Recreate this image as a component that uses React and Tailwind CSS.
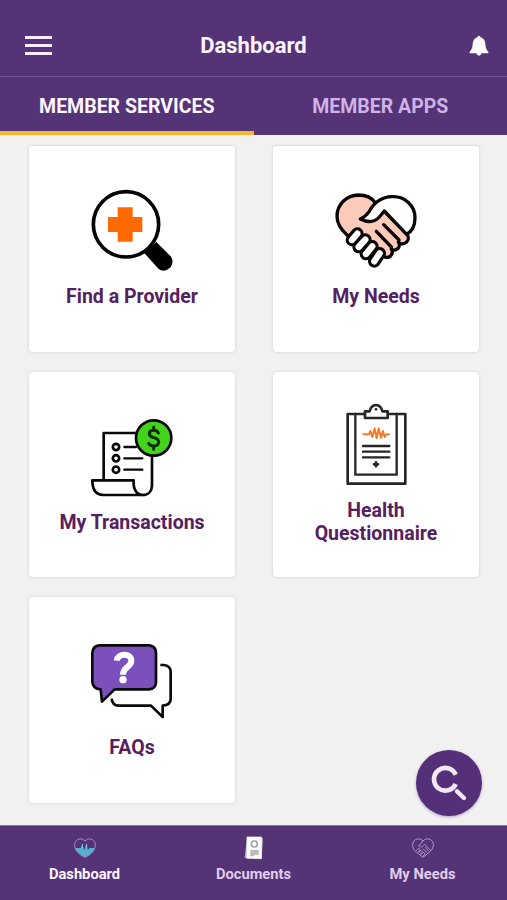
import { useState } from "react";

function SearchCross() {
  return (
    <svg viewBox="0 -1 312 300" className="w-[104px] h-[100px]" fill="none">
      <path d="M205 208 L229 185 L272 228 Q283 243 272 261 Q254 278 236 266 L190 215 Z" fill="#000" />
      <circle cx="138" cy="132" r="98" fill="#fff" stroke="#050505" strokeWidth="11" />
      <path d="M113 81h45v29h29v45h-29v29h-45v-29H84v-45h29z" fill="#ff6a00" />
    </svg>
  );
}

const fingers = [
  "M97 160L81 179",
  "M121 178L101 200",
  "M142 198L123 221",
  "M164 219L148 243",
];

function HeartHands() {
  return (
    <svg viewBox="-3 -1 312 300" className="w-[104px] h-[100px]" fill="none" stroke="#0a0606" strokeWidth="10" strokeLinejoin="round" strokeLinecap="round">
      <path d="M151 67C139 51 121 44 101 44C64 45 36 72 36 108C36 132 49 149 66 164L172 224A16 16 0 0 0 199 206A15 15 0 0 0 220 185A15 15 0 0 0 245 161L178 92Z" fill="#fccbb9" />
      <path d="M106 116C119 110 126 103 133 93C148 65 173 50 201 49C240 47 270 77 270 112C270 133 261 153 245 162L178 92L163 110C148 127 126 126 106 116Z" fill="#fff" />
      <path d="M176 133L222 179M154 153L199 200" />
      {fingers.map((d) => (
        <g key={d}>
          <path d={d} strokeWidth="38" />
          <path d={d} stroke="#fff" strokeWidth="19" />
        </g>
      ))}
    </svg>
  );
}

function Receipt() {
  return (
    <svg viewBox="0 1 312 285" className="w-[104px] h-[95px]" fill="none" stroke="#080808" strokeWidth="8" strokeLinejoin="round" strokeLinecap="round">
      <path d="M71 208V67H175M216 130V222C216 242 205 253 188 253" />
      <path d="M188 253H70C47 253 37 238 37 209H161C159 236 170 253 188 253Z" fill="#fff" />
      <circle cx="108" cy="109" r="9.5" />
      <circle cx="108" cy="143" r="9.5" />
      <circle cx="108" cy="177" r="9.5" />
      <path d="M133 109H168M133 143H187M133 177H187" strokeWidth="7" />
      <circle cx="221" cy="82" r="53" fill="#44d31d" />
      <path d="M235 67C231 56 208 56 208 69C208 85 236 77 236 94C236 109 211 109 206 98M221 49V58M221 106V116" strokeWidth="9" stroke="#0c2b07" />
    </svg>
  );
}

function Clipboard() {
  return (
    <svg viewBox="-3 1 312 300" className="w-[104px] h-[100px]" fill="none" stroke="#262626" strokeWidth="8" strokeLinejoin="round" strokeLinecap="round">
      <path d="M68 58H241V267H68Z" />
      <path d="M91 58V240H215V58" strokeWidth="7" />
      <path d="M120 70V50H134Q138 32 153 31Q168 32 172 50H188V70Z" fill="#fff" />
      <circle cx="153" cy="44" r="4" fill="#262626" stroke="none" />
      <path d="M115 119H132L136 109L142 127L149 101L155 131L161 101L168 129L174 109L179 127L184 119H192" stroke="#f47b2c" strokeWidth="6" />
      <path d="M114 154H193M114 171H193M114 188H193" strokeWidth="7" />
      <path d="M153 203V215M147 209H159" strokeWidth="8" />
    </svg>
  );
}

function Bubbles() {
  return (
    <svg viewBox="0 0 312 285" className="w-[104px] h-[95px]" fill="none" stroke="#0a0a0a" strokeWidth="8" strokeLinejoin="round" strokeLinecap="butt">
      <path d="M241 90H251Q272 92 272 111V191Q272 210 248 212V246L213 212H116Q97 212 95 191" strokeWidth="8" />
      <path d="M58 31H208Q228 34 228 53V142Q227 161 207 163H104L66 200L62 163Q38 162 37 139V54Q38 33 58 31Z" fill="#7b4fbc" />
      <path d="M110 77C113 54 154 52 154 77C154 97 129 95 129 119" stroke="#fff" strokeWidth="18" />
      <circle cx="129" cy="134" r="11" fill="#fff" stroke="none" />
    </svg>
  );
}

function PulseHeart() {
  return (
    <svg viewBox="0 0 66 60" className="w-[22px] h-5" fill="none">
      <path d="M3 30H20L25 20L31 37L36 20L42 36L46 30H63C58 42 46 52 33 58C20 52 8 42 3 30Z" fill="#4eb3cc" />
      <path d="M25 18V31M38 18V31" stroke="#8bd0e4" strokeWidth="3" />
      <path d="M33 9C25-1 4 0 2 19C1 36 14 49 33 58C52 49 65 36 64 19C62 0 41-1 33 9Z" stroke="#a98ac6" strokeWidth="3" />
    </svg>
  );
}

function Papers() {
  return (
    <svg viewBox="0 0 60 72" className="w-5 h-6" fill="none">
      <path d="M9 2L57 6L53 70L2 66Z" fill="#bdb5c5" />
      <path d="M8 2H53V68H8Z" fill="#fafafa" />
      <circle cx="31" cy="24" r="9" stroke="#a4a7a7" strokeWidth="5" />
      <path d="M19 42H44V57H32L28 61H19Z" fill="#bbbdbd" />
    </svg>
  );
}

function SmallHands() {
  return (
    <svg viewBox="0 0 66 60" className="w-[22px] h-5" fill="none" stroke="#b594ce" strokeWidth="3" strokeLinejoin="round">
      <path d="M33 9C24-1 4 0 2 19C1 31 8 39 14 43L33 58L52 43C59 37 65 29 64 19C62 0 41-1 33 9Z" />
      <path d="M33 9L20 24C25 30 32 26 38 19L56 37M39 27L51 40M33 32L46 45M12 38L20 31L25 36L17 43M20 44L27 37L32 42L24 49M27 50L34 43L39 48L32 56" />
    </svg>
  );
}

const services = [
  { name: "Find a Provider", icon: SearchCross, card: "pt-[34px]", label: "mt-[5px]" },
  { name: "My Needs", icon: HeartHands, card: "pt-[34px]", label: "mt-[5px]" },
  { name: "My Transactions", icon: Receipt, card: "pt-[39px]", label: "mt-[5px]" },
  { name: "Health Questionnaire", icon: Clipboard, card: "pt-[23px]", label: "mt-[4px]" },
  { name: "FAQs", icon: Bubbles, card: "pt-[38px]", label: "mt-[6px]" },
];

const navItems = [
  { name: "Dashboard", icon: PulseHeart },
  { name: "Documents", icon: Papers },
  { name: "My Needs", icon: SmallHands },
];

export default function App() {
  const [tab, setTab] = useState("services");
  const [page, setPage] = useState("Dashboard");

  return (
    <div className="relative flex flex-col h-[900px] w-full bg-[#f1f1f0] font-[Roboto,sans-serif] overflow-hidden">
      <header className="h-[77px] shrink-0 pt-[15px] px-[18px] bg-[#543376] border-b border-[#75539a] flex items-center justify-between">
        <button aria-label="Menu" className="w-[28px] ml-[7px] flex flex-col gap-[5px]">
          <span className="h-[3px] w-[27px] bg-[#f8edff]" />
          <span className="h-[3px] w-[27px] bg-[#f8edff]" />
          <span className="h-[3px] w-[27px] bg-[#f8edff]" />
        </button>
        <h1 className="text-[22px] leading-7 font-bold text-[#fdf5ff]">Dashboard</h1>
        <button aria-label="Notifications" className="w-[35px] flex justify-end">
          <svg viewBox="0 0 60 66" className="w-5 h-[22px]" fill="#fff">
            <path d="M30 2Q34 2 35 7Q48 11 49 27Q49 42 58 50V55H38Q35 62 30 62Q25 62 22 55H2V50Q11 42 11 27Q12 11 25 7Q26 2 30 2Z" />
          </svg>
        </button>
      </header>

      <div className="h-[58px] shrink-0 grid grid-cols-2 bg-[#543376] text-[19.5px] font-bold">
        <button onClick={() => setTab("services")} className={`pt-[5px] border-b-[4px] ${tab === "services" ? "border-[#f7b731] text-[#fff5ff]" : "border-transparent text-[#cfb2e6]"}`}>MEMBER SERVICES</button>
        <button onClick={() => setTab("apps")} className={`pt-[5px] border-b-[4px] ${tab === "apps" ? "border-[#f7b731] text-[#fff5ff]" : "border-transparent text-[#cfb2e6]"}`}>MEMBER APPS</button>
      </div>

      <main className="flex-1 pt-[11px] pl-[29px]">
        <div className="grid grid-cols-[206px_206px] gap-x-[38px] gap-y-[20px]">
          {services.map((s) => (
            <div key={s.name} className={`h-[205.5px] bg-white rounded-[4px] shadow-[0_0_2px_1px_#dedede] flex flex-col items-center ${s.card}`}>
              <s.icon />
              <p className={`w-[160px] text-center text-[19.5px] leading-[23px] font-bold text-[#55205f] ${s.label}`}>{s.name}</p>
            </div>
          ))}
        </div>
      </main>

      <button aria-label="Search" className="absolute left-[416px] top-[750px] size-[66px] rounded-full bg-[#533078] shadow-[0_1px_3px_#b49bc9]">
        <svg viewBox="48 30 198 198" className="size-[66px]" fill="none" stroke="#f6e6fa">
          <path d="M167 104A34 34 0 1 0 167 132" strokeWidth="14" />
          <path d="M171 154L192 174" strokeWidth="13" strokeLinecap="round" />
        </svg>
      </button>

      <nav className="h-[75px] shrink-0 grid grid-cols-3 bg-[#543376] border-t border-[#8e70a7] text-[14.7px] font-bold">
        {navItems.map((n) => (
          <button key={n.name} onClick={() => setPage(n.name)} className={`flex flex-col items-center pt-[9px] ${page === n.name ? "text-[#fff5ff]" : "text-[#e2cced]"}`}>
            <span className="h-[25px] flex items-center">
              <n.icon />
            </span>
            <span className="leading-[18px] mt-[5px]">{n.name}</span>
          </button>
        ))}
      </nav>
    </div>
  );
}
